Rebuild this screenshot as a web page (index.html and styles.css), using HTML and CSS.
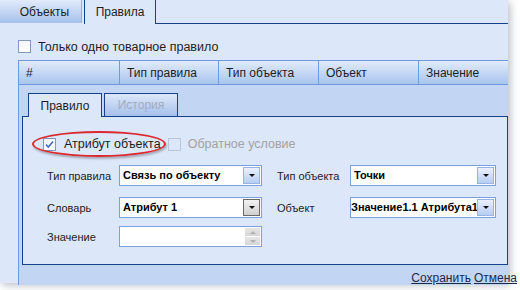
FILE: index.html
```html
<!DOCTYPE html>
<html lang="ru">
<head>
  <meta charset="UTF-8">
  <title>Правила</title>
  <link rel="stylesheet" href="styles.css">
</head>
<body>
  <div class="window">
    <div class="tabstrip">
      <div class="tab first">Объекты</div>
      <div class="tab active">Правила</div>
      <div class="tab-fill"></div>
    </div>

    <div class="panel">
      <label class="check-row">
        <span class="checkbox"></span>
        Только одно товарное правило
      </label>

      <div class="grid">
        <div class="grid-head">
          <div class="col">#</div>
          <div class="col">Тип правила</div>
          <div class="col">Тип объекта</div>
          <div class="col">Объект</div>
          <div class="col">Значение</div>
        </div>

        <div class="grid-body">
          <div class="subtabs">
            <div class="subtab active">Правило</div>
            <div class="subtab disabled">История</div>
          </div>

          <div class="subpanel">
            <div class="flags">
              <label class="flag marked">
                <span class="checkbox checked">
                  <svg width="11" height="11" viewBox="0 0 11 11"><path d="M2 5.5 L4.3 8 L9 2.5" fill="none" stroke="#3d6dbf" stroke-width="1.6"/></svg>
                </span>
                Атрибут объекта
              </label>
              <label class="flag disabled">
                <span class="checkbox"></span>
                Обратное условие
              </label>
            </div>

            <div class="form">
              <div class="row">
                <span class="label">Тип правила</span>
                <div class="select">
                  <span class="value">Связь по объекту</span>
                  <span class="btn"><i class="arrow"></i></span>
                </div>
                <span></span>
                <span class="label">Тип объекта</span>
                <div class="select">
                  <span class="value">Точки</span>
                  <span class="btn"><i class="arrow"></i></span>
                </div>
              </div>

              <div class="row">
                <span class="label">Словарь</span>
                <div class="select">
                  <span class="value">Атрибут 1</span>
                  <span class="btn pressed"><i class="arrow"></i></span>
                </div>
                <span></span>
                <span class="label">Объект</span>
                <div class="select">
                  <span class="value flush">Значение1.1 Атрибута1</span>
                  <span class="btn"><i class="arrow"></i></span>
                </div>
              </div>

              <div class="row last">
                <span class="label">Значение</span>
                <div class="spin">
                  <span class="spin-field"></span>
                  <span class="spin-btns">
                    <span class="spin-up"><i class="arrow up"></i></span>
                    <span class="spin-down"><i class="arrow"></i></span>
                  </span>
                </div>
              </div>
            </div>
          </div>

          <div class="actions">
            <a href="#">Сохранить</a>
            <a href="#">Отмена</a>
          </div>
        </div>
      </div>
    </div>
  </div>
</body>
</html>
```

FILE: styles.css
```css
:root {
  --panel-bg: #dce7f9;
  --navy: #15428b;
  --grid-line: #6c9be2;
  --body-bg: #c2d5f3;
  --field-line: #7e9fdf;
}

body {
  margin: 0;
  width: 520px;
  height: 290px;
  overflow: hidden;
  background: #fff;
  font-family: 'Liberation Sans', Arial, sans-serif;
  font-size: 12px;
  color: #1e1e1e;
}

.window {
  width: 508px;
  height: 283px;
  background: var(--panel-bg);
  box-shadow: 2px 2px 8px rgba(50, 60, 80, 0.35);
  display: flex;
  flex-direction: column;
}

/* top tabs */
.tabstrip {
  display: flex;
  height: 24px;
  flex: none;
}

.tab {
  box-sizing: border-box;
  height: 23px;
  display: flex;
  align-items: center;
  justify-content: center;
  background: linear-gradient(#e2ebfa, #a6c1eb);
  border-right: 1px solid #8db2e3;
}

.tab.first {
  width: 82px;
  padding-left: 8px;
}

.tab.active {
  width: 72px;
  height: 24px;
  margin-left: 2px;
  background: var(--panel-bg);
  border-left: 1px solid var(--navy);
  border-right: 1px solid var(--navy);
}

.tab-fill {
  flex: 1;
  height: 23px;
  border-bottom: 1px solid var(--navy);
}

.panel {
  flex: 1;
  padding: 16px 0 0 18px;
  display: flex;
  flex-direction: column;
}

.check-row {
  display: flex;
  align-items: center;
  gap: 7px;
  height: 13px;
  font-size: 12.5px;
}

.checkbox {
  box-sizing: border-box;
  width: 13px;
  height: 13px;
  flex: none;
  border: 1px solid #8197bb;
  background: linear-gradient(#f4f6fa, #fff);
  display: flex;
  align-items: center;
  justify-content: center;
}

/* grid */
.grid {
  flex: 1;
  margin-top: 7px;
  border-left: 1px solid var(--grid-line);
  display: flex;
  flex-direction: column;
}

.grid-head {
  display: grid;
  grid-template-columns: 101px 99px 100px 100px 1fr;
  height: 25px;
  box-sizing: border-box;
  border-top: 1px solid var(--grid-line);
  border-bottom: 1px solid var(--grid-line);
  background: linear-gradient(#e0ebfb, #a9c5ee);
}

.col {
  display: flex;
  align-items: center;
  padding-left: 7px;
  border-right: 1px solid var(--grid-line);
}

.col:last-child {
  border-right: none;
}

.grid-body {
  flex: 1;
  background: var(--body-bg);
  padding: 8px 0 0 3px;
  display: flex;
  flex-direction: column;
}

.subtabs {
  display: flex;
  gap: 2px;
  padding-left: 6px;
  height: 23px;
}

.subtab {
  box-sizing: border-box;
  width: 74px;
  height: 23px;
  display: flex;
  align-items: center;
  justify-content: center;
  border: 1px solid var(--navy);
  border-bottom: none;
  background: linear-gradient(#dde8fa, #a5c0ea);
}

.subtab.active {
  height: 24px;
  background: var(--panel-bg);
  position: relative;
  z-index: 1;
}

.subtab.disabled {
  color: #a4acbb;
}

.subpanel {
  box-sizing: border-box;
  height: 149px;
  border: 1px solid var(--navy);
  background: var(--panel-bg);
  padding: 20px 0 0 20px;
}

.flags {
  display: flex;
  gap: 7px;
  height: 14px;
  font-size: 12.5px;
}

.flag {
  display: flex;
  align-items: center;
  gap: 8px;
}

.flag.marked {
  position: relative;
}

.flag.marked::after {
  content: '';
  position: absolute;
  left: -11px;
  right: -5px;
  top: -6px;
  bottom: -6px;
  border: 2px solid #db2a2e;
  border-radius: 50%;
  box-shadow: 1px 2px 2px rgba(0, 0, 0, 0.25);
}

.flag.disabled {
  color: #a2a2a2;
  gap: 7px;
}

.flag.disabled .checkbox {
  border-color: #b9c5d9;
  background: transparent;
}

/* form */
.form {
  margin: 14px 0 0 4px;
}

.row {
  display: grid;
  grid-template-columns: 72px 143px 15px 73px 146px;
  align-items: center;
  height: 21px;
}

.row + .row {
  margin-top: 11px;
}

.row.last {
  margin-top: 8px;
}

.label {
  font-size: 11px;
  color: #222;
}

.select,
.spin {
  box-sizing: border-box;
  height: 21px;
  display: flex;
  border: 1px solid var(--field-line);
  background: #fff;
}

.value {
  flex: 1;
  overflow: hidden;
  white-space: nowrap;
  padding-left: 3px;
  font-size: 11px;
  font-weight: bold;
  line-height: 19px;
  color: #000;
}

.value.flush {
  padding-left: 0;
}

.btn {
  box-sizing: border-box;
  width: 17px;
  margin: 1px 1px 1px 0;
  border: 1px solid #97b4e6;
  background: linear-gradient(#eaf1fd, #b6cdf2);
  display: flex;
  align-items: center;
  justify-content: center;
}

.btn.pressed {
  border-color: #6a6a6a;
  background: linear-gradient(#f2f2f2, #cfcfcf);
}

.arrow {
  width: 0;
  height: 0;
  border-left: 3px solid transparent;
  border-right: 3px solid transparent;
  border-top: 3px solid #111;
}

.spin-field {
  flex: 1;
}

.spin-btns {
  width: 15px;
  margin: 1px 1px 1px 0;
  display: flex;
  flex-direction: column;
  gap: 1px;
}

.spin-up,
.spin-down {
  flex: 1;
  display: flex;
  align-items: center;
  justify-content: center;
  background: linear-gradient(#e6e6e6, #d6d6d6);
}

.spin-btns .arrow {
  border-top-color: #b2b2b2;
}

.spin-btns .arrow.up {
  border-top: none;
  border-bottom: 3px solid #b2b2b2;
}

.actions {
  display: flex;
  justify-content: flex-end;
  gap: 3px;
  margin-right: -9px;
  padding-top: 6px;
}

.actions a {
  color: #1a2a48;
  white-space: nowrap;
}
```
